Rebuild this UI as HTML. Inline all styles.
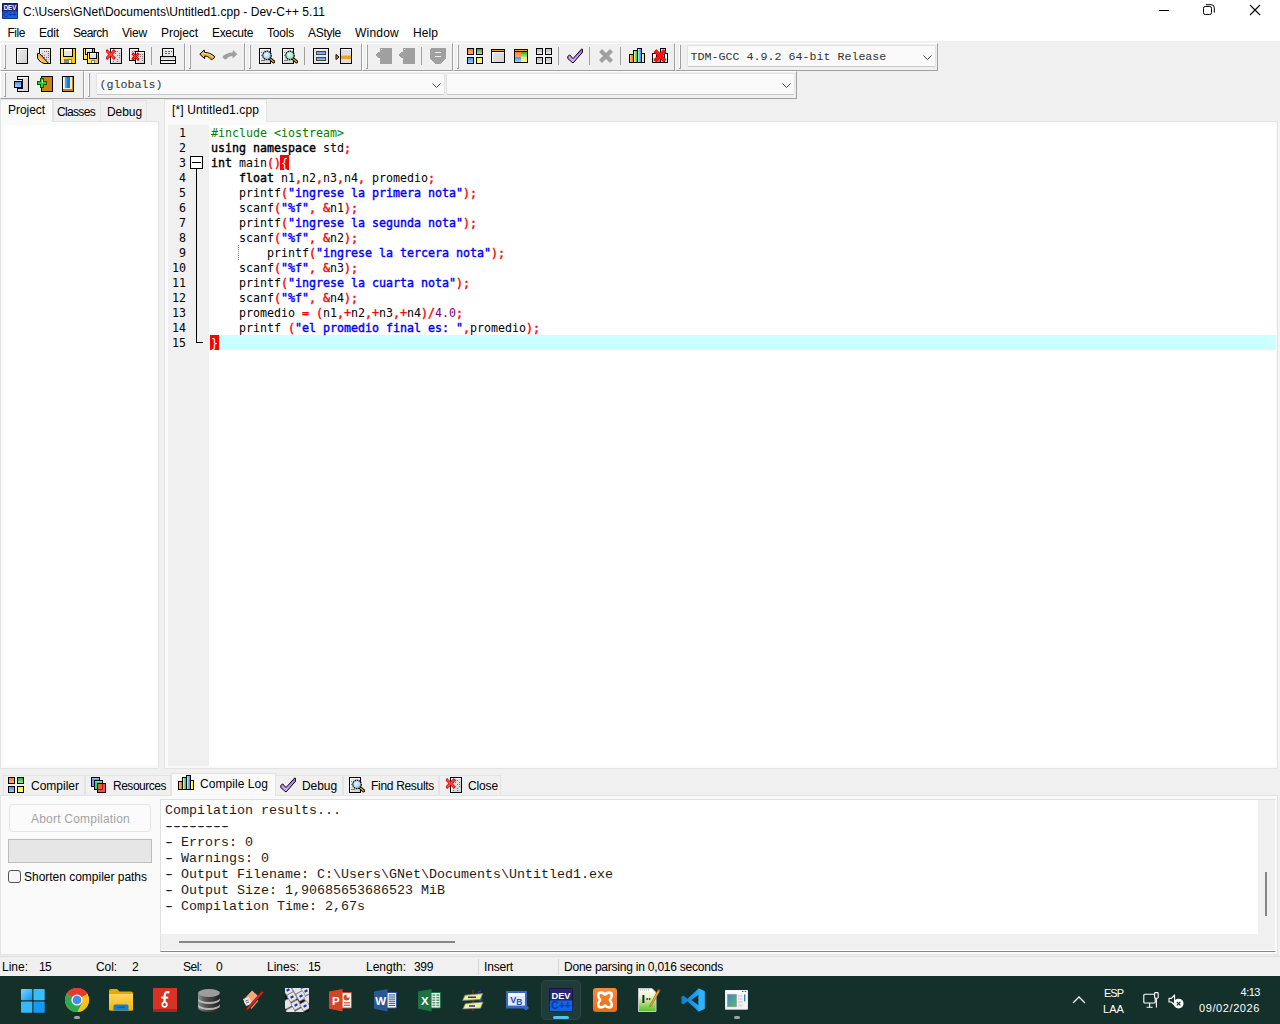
<!DOCTYPE html>
<html lang="es"><head><meta charset="utf-8"><title>C:\Users\GNet\Documents\Untitled1.cpp - Dev-C++ 5.11</title>
<style>
html,body{margin:0;padding:0}
body{width:1280px;height:1024px;overflow:hidden;position:relative;background:#f0f0f0;font-family:"Liberation Sans",sans-serif;font-size:12px;color:#000;line-height:1}
div,span,svg{position:absolute;box-sizing:border-box}
.t{white-space:pre;line-height:16px;height:16px}
.ui{font-family:"Liberation Sans",sans-serif;font-size:12px}
.mono{font-family:"Liberation Mono",monospace}
.code{font-family:"DejaVu Sans Mono","Liberation Mono",monospace;font-size:11.63px;white-space:pre;line-height:15px;height:15px;left:211px;letter-spacing:0}
.code b{font-weight:normal;-webkit-text-stroke:0.4px}
.code span,.code b{position:static}
.ln{font-family:"DejaVu Sans Mono","Liberation Mono",monospace;font-size:11.63px;line-height:15px;height:15px;left:168px;width:18px;text-align:right;color:#000}
.code b.br{color:#fff;-webkit-text-stroke:0}
.k{color:#000}
.s{color:#0000ff}
.r{color:#ff0000}
.p{color:#008000}
.n{color:#800080}
.tb{background:#f0f0f0;border-top:1px solid #fff;border-left:1px solid #fff;border-right:1px solid #a0a0a0;border-bottom:1px solid #a0a0a0}
.grip{width:1px;background:#a0a0a0;height:24px}
.sep{width:1px;background:#a0a0a0;height:18px;top:47px}
.combo{background:#fafafa;border:1px solid #e2e2e2;border-bottom-color:#c8c8c8;border-radius:2px}
.combo .t{font-family:"Liberation Mono",monospace;font-size:11.67px;left:2.5px;top:3px;color:#333}
.tab{background:#f0f0f0;border:1px solid #e3e3e3;border-bottom:none}
.tabsel{background:#fafafa;border:1px solid #e3e3e3;border-bottom:none}
.log{color:#1c1c1c;font-family:"Liberation Mono",monospace;font-size:13.33px;white-space:pre;line-height:16px;height:16px;left:165px}
.dash{text-shadow:1px 0 0 #1c1c1c,-1px 0 0 #1c1c1c}
.tray{color:#fff;font-size:12px}
</style></head>
<body>
<div style="left:0;top:0;width:1280px;height:41px;background:#fff"></div>
<div class="t ui" style="left:23px;top:4px;letter-spacing:0.040px;">C:\Users\GNet\Documents\Untitled1.cpp - Dev-C++ 5.11</div>
<div class="t ui" style="left:7.5px;top:25px;letter-spacing:-0.461px;">File</div>
<div class="t ui" style="left:39px;top:25px;letter-spacing:-0.172px;">Edit</div>
<div class="t ui" style="left:73px;top:25px;letter-spacing:-0.505px;">Search</div>
<div class="t ui" style="left:122px;top:25px;letter-spacing:-0.199px;">View</div>
<div class="t ui" style="left:161px;top:25px;letter-spacing:-0.051px;">Project</div>
<div class="t ui" style="left:212px;top:25px;letter-spacing:-0.337px;">Execute</div>
<div class="t ui" style="left:267px;top:25px;letter-spacing:-0.203px;">Tools</div>
<div class="t ui" style="left:308px;top:25px;letter-spacing:-0.281px;">AStyle</div>
<div class="t ui" style="left:355px;top:25px;letter-spacing:0.219px;">Window</div>
<div class="t ui" style="left:413px;top:25px;letter-spacing:0.078px;">Help</div>
<div class="tb" style="left:0px;top:43px;width:185px;height:28px"></div>
<div style="left:4px;top:45px;width:1px;height:23px;background:#fff"></div>
<div class="grip" style="left:5px;top:45px"></div>
<div style="left:4px;top:68px;width:2px;height:1px;background:#a0a0a0"></div>
<div class="tb" style="left:185px;top:43px;width:60px;height:28px"></div>
<div style="left:189px;top:45px;width:1px;height:23px;background:#fff"></div>
<div class="grip" style="left:190px;top:45px"></div>
<div style="left:189px;top:68px;width:2px;height:1px;background:#a0a0a0"></div>
<div class="tb" style="left:245px;top:43px;width:117px;height:28px"></div>
<div style="left:249px;top:45px;width:1px;height:23px;background:#fff"></div>
<div class="grip" style="left:250px;top:45px"></div>
<div style="left:249px;top:68px;width:2px;height:1px;background:#a0a0a0"></div>
<div class="tb" style="left:362px;top:43px;width:91px;height:28px"></div>
<div style="left:366px;top:45px;width:1px;height:23px;background:#fff"></div>
<div class="grip" style="left:367px;top:45px"></div>
<div style="left:366px;top:68px;width:2px;height:1px;background:#a0a0a0"></div>
<div class="tb" style="left:453px;top:43px;width:222px;height:28px"></div>
<div style="left:457px;top:45px;width:1px;height:23px;background:#fff"></div>
<div class="grip" style="left:458px;top:45px"></div>
<div style="left:457px;top:68px;width:2px;height:1px;background:#a0a0a0"></div>
<div class="tb" style="left:675px;top:43px;width:263px;height:28px"></div>
<div style="left:679px;top:45px;width:1px;height:23px;background:#fff"></div>
<div class="grip" style="left:680px;top:45px"></div>
<div style="left:679px;top:68px;width:2px;height:1px;background:#a0a0a0"></div>
<div class="tb" style="left:0px;top:71px;width:84px;height:28px"></div>
<div style="left:4px;top:73px;width:1px;height:23px;background:#fff"></div>
<div class="grip" style="left:5px;top:73px"></div>
<div style="left:4px;top:96px;width:2px;height:1px;background:#a0a0a0"></div>
<div class="tb" style="left:84px;top:71px;width:713px;height:28px"></div>
<div style="left:88px;top:73px;width:1px;height:23px;background:#fff"></div>
<div class="grip" style="left:89px;top:73px"></div>
<div style="left:88px;top:96px;width:2px;height:1px;background:#a0a0a0"></div>
<div class="sep" style="left:151px"></div>
<div class="sep" style="left:304px"></div>
<div class="sep" style="left:421px"></div>
<div class="sep" style="left:558px"></div>
<div class="sep" style="left:589px"></div>
<div class="sep" style="left:620px"></div>
<div class="combo" style="left:687px;top:45px;width:249px;height:22px"><div class="t">TDM-GCC 4.9.2 64-bit Release</div></div>
<div class="combo" style="left:96px;top:73px;width:349px;height:22px"><div class="t">(globals)</div></div>
<div class="combo" style="left:446px;top:73px;width:349px;height:22px"></div>
<svg style="left:923px;top:55px" width="9" height="5" viewBox="0 0 9 5"><path d="M0.5 0.5 L4.5 4.5 L8.5 0.5" fill="none" stroke="#444" stroke-width="1"/></svg>
<svg style="left:432px;top:83px" width="9" height="5" viewBox="0 0 9 5"><path d="M0.5 0.5 L4.5 4.5 L8.5 0.5" fill="none" stroke="#444" stroke-width="1"/></svg>
<svg style="left:782px;top:83px" width="9" height="5" viewBox="0 0 9 5"><path d="M0.5 0.5 L4.5 4.5 L8.5 0.5" fill="none" stroke="#444" stroke-width="1"/></svg>
<div style="left:0;top:121px;width:159px;height:648px;background:#fafafa;border:1px solid #e3e3e3"></div>
<div style="left:4px;top:125px;width:154px;height:640px;background:#fff"></div>
<div class="tabsel" style="left:0;top:99px;width:53px;height:23px"></div>
<div class="tab" style="left:53px;top:100px;width:48px;height:21px"></div>
<div class="tab" style="left:100px;top:100px;width:47px;height:21px"></div>
<div class="t ui" style="left:8px;top:102px;letter-spacing:-0.051px;">Project</div>
<div class="t ui" style="left:57px;top:104px;letter-spacing:-0.670px;">Classes</div>
<div class="t ui" style="left:107px;top:104px;letter-spacing:-0.075px;">Debug</div>
<div style="left:164px;top:121px;width:1114px;height:648px;background:#fafafa;border:1px solid #e3e3e3"></div>
<div class="tabsel" style="left:164px;top:99px;width:103px;height:23px"></div>
<div class="t ui" style="left:172px;top:102px;letter-spacing:0.134px;">[*] Untitled1.cpp</div>
<div style="left:168px;top:125px;width:1108px;height:641px;background:#fff"></div>
<div style="left:168px;top:125px;width:41px;height:641px;background:#f0f0f0"></div>
<div style="left:210px;top:335px;width:1066px;height:15px;background:#ccffff"></div>
<div style="left:280px;top:155px;width:9px;height:15px;background:#ff0000"></div>
<div style="left:210px;top:335px;width:9px;height:15px;background:#ff0000"></div>
<div class="ln" style="top:126px">1</div>
<div class="code" style="top:126px"><span class="p">#include &lt;iostream&gt;</span></div>
<div class="ln" style="top:141px">2</div>
<div class="code" style="top:141px"><b class="k">using</b> <b class="k">namespace</b> std<b class="r">;</b></div>
<div class="ln" style="top:156px">3</div>
<div class="code" style="top:156px"><b class="k">int</b> main<b class="r">()</b><b class="br">{</b></div>
<div class="ln" style="top:171px">4</div>
<div class="code" style="top:171px">    <b class="k">float</b> n1<b class="r">,</b>n2<b class="r">,</b>n3<b class="r">,</b>n4<b class="r">,</b> promedio<b class="r">;</b></div>
<div class="ln" style="top:186px">5</div>
<div class="code" style="top:186px">    printf<b class="r">(</b><b class="s">"ingrese la primera nota"</b><b class="r">);</b></div>
<div class="ln" style="top:201px">6</div>
<div class="code" style="top:201px">    scanf<b class="r">(</b><b class="s">"%f"</b><b class="r">,</b> <b class="r">&amp;</b>n1<b class="r">);</b></div>
<div class="ln" style="top:216px">7</div>
<div class="code" style="top:216px">    printf<b class="r">(</b><b class="s">"ingrese la segunda nota"</b><b class="r">);</b></div>
<div class="ln" style="top:231px">8</div>
<div class="code" style="top:231px">    scanf<b class="r">(</b><b class="s">"%f"</b><b class="r">,</b> <b class="r">&amp;</b>n2<b class="r">);</b></div>
<div class="ln" style="top:246px">9</div>
<div class="code" style="top:246px">        printf<b class="r">(</b><b class="s">"ingrese la tercera nota"</b><b class="r">);</b></div>
<div class="ln" style="top:261px">10</div>
<div class="code" style="top:261px">    scanf<b class="r">(</b><b class="s">"%f"</b><b class="r">,</b> <b class="r">&amp;</b>n3<b class="r">);</b></div>
<div class="ln" style="top:276px">11</div>
<div class="code" style="top:276px">    printf<b class="r">(</b><b class="s">"ingrese la cuarta nota"</b><b class="r">);</b></div>
<div class="ln" style="top:291px">12</div>
<div class="code" style="top:291px">    scanf<b class="r">(</b><b class="s">"%f"</b><b class="r">,</b> <b class="r">&amp;</b>n4<b class="r">);</b></div>
<div class="ln" style="top:306px">13</div>
<div class="code" style="top:306px">    promedio <b class="r">=</b> <b class="r">(</b>n1<b class="r">,+</b>n2<b class="r">,+</b>n3<b class="r">,+</b>n4<b class="r">)/</b><span class="n">4.0</span><b class="r">;</b></div>
<div class="ln" style="top:321px">14</div>
<div class="code" style="top:321px">    printf <b class="r">(</b><b class="s">"el promedio final es: "</b><b class="r">,</b>promedio<b class="r">);</b></div>
<div class="ln" style="top:336px">15</div>
<div class="code" style="top:336px"><b class="br">}</b></div>
<div style="left:190px;top:156px;width:13px;height:13px;border:1px solid #000;background:#fff"></div>
<div style="left:192px;top:162px;width:9px;height:1px;background:#000"></div>
<div style="left:196px;top:169px;width:1px;height:174px;background:#000"></div>
<div style="left:196px;top:342px;width:7px;height:1px;background:#000"></div>
<div style="left:238px;top:245px;width:0;height:15px;border-left:1px dotted #888"></div>
<div style="left:1278px;top:121px;width:2px;height:648px;background:#f4f4f4"></div>
<div style="left:0;top:795px;width:1278px;height:160px;background:#fafafa;border:1px solid #e3e3e3"></div>
<div class="tab" style="left:3px;top:775px;width:82px;height:20px"></div>
<div class="t ui" style="left:31px;top:778px;letter-spacing:-0.002px;">Compiler</div>
<div class="tab" style="left:85px;top:775px;width:86px;height:20px"></div>
<div class="t ui" style="left:113px;top:778px;letter-spacing:-0.484px;">Resources</div>
<div class="tabsel" style="left:171px;top:773px;width:105px;height:23px"></div>
<div class="t ui" style="left:200px;top:776px;letter-spacing:0.057px;">Compile Log</div>
<div class="tab" style="left:275px;top:775px;width:68px;height:20px"></div>
<div class="t ui" style="left:302px;top:778px;letter-spacing:-0.075px;">Debug</div>
<div class="tab" style="left:343px;top:775px;width:96px;height:20px"></div>
<div class="t ui" style="left:371px;top:778px;letter-spacing:-0.309px;">Find Results</div>
<div class="tab" style="left:439px;top:775px;width:62px;height:20px"></div>
<div class="t ui" style="left:468px;top:778px;letter-spacing:-0.138px;">Close</div>
<div style="left:9px;top:804px;width:142px;height:28px;border:1px solid #e5e5e5;border-radius:4px;background:#fbfbfb"></div>
<div class="t ui" style="left:31px;top:811px;letter-spacing:0.212px;color:#a3a3a3">Abort Compilation</div>
<div style="left:8px;top:839px;width:144px;height:24px;border:1px solid #bcbcbc;background:#e6e6e6"></div>
<div style="left:8px;top:870px;width:13px;height:13px;border:1px solid #555;border-radius:3px;background:#f6f6f6"></div>
<div class="t ui" style="left:24px;top:869px;letter-spacing:-0.018px;">Shorten compiler paths</div>
<div style="left:160px;top:799px;width:1116px;height:153px;background:#f0f0f0;border:1px solid #e0e0e0;border-bottom-color:#868686;border-right-color:#fff"></div>
<div style="left:161px;top:950px;width:1114px;height:1px;background:#fff"></div>
<div style="left:161px;top:800px;width:1097px;height:134px;background:#fff"></div>
<div class="log" style="top:803px">Compilation results...</div>
<div class="log dash" style="top:819px">--------</div>
<div class="log" style="top:835px"><span class="dash" style="position:static">-</span> Errors: 0</div>
<div class="log" style="top:851px"><span class="dash" style="position:static">-</span> Warnings: 0</div>
<div class="log" style="top:867px"><span class="dash" style="position:static">-</span> Output Filename: C:\Users\GNet\Documents\Untitled1.exe</div>
<div class="log" style="top:883px"><span class="dash" style="position:static">-</span> Output Size: 1,90685653686523 MiB</div>
<div class="log" style="top:899px"><span class="dash" style="position:static">-</span> Compilation Time: 2,67s</div>
<div style="left:179px;top:941px;width:276px;height:2px;background:#868686"></div>
<div style="left:1265px;top:872px;width:2px;height:44px;background:#868686"></div>
<div style="left:0;top:956px;width:1280px;height:20px;background:#f0f0f0;border-top:1px solid #dcdcdc"></div>
<div class="t ui" style="left:2px;top:959px;letter-spacing:-0.006px;">Line:</div>
<div class="t ui" style="left:39px;top:959px;letter-spacing:-0.680px;">15</div>
<div class="t ui" style="left:96px;top:959px;letter-spacing:-0.086px;">Col:</div>
<div class="t ui" style="left:132px;top:959px;letter-spacing:-0.688px;">2</div>
<div class="t ui" style="left:183px;top:959px;letter-spacing:-0.422px;">Sel:</div>
<div class="t ui" style="left:216px;top:959px;letter-spacing:-0.688px;">0</div>
<div class="t ui" style="left:267px;top:959px;letter-spacing:-0.005px;">Lines:</div>
<div class="t ui" style="left:308px;top:959px;letter-spacing:-0.680px;">15</div>
<div class="t ui" style="left:366px;top:959px;letter-spacing:-0.007px;">Length:</div>
<div class="t ui" style="left:414px;top:959px;letter-spacing:-0.344px;">399</div>
<div class="t ui" style="left:484px;top:959px;letter-spacing:-0.169px;">Insert</div>
<div class="t ui" style="left:564px;top:959px;letter-spacing:-0.223px;">Done parsing in 0,016 seconds</div>
<div style="left:478px;top:959px;width:1px;height:16px;background:#d7d7d7"></div>
<div style="left:558px;top:959px;width:1px;height:16px;background:#d7d7d7"></div>
<div style="left:0;top:976px;width:1280px;height:48px;background:#13302a"></div>
<svg width="0" height="0" style="left:0;top:0"><defs>
<linearGradient id="gDoc" x1="0" y1="0" x2="1" y2="1"><stop offset="0" stop-color="#e9e9e9"/><stop offset="1" stop-color="#d2d2d2"/></linearGradient>
<linearGradient id="gYel" x1="0" y1="0" x2="1" y2="0"><stop offset="0" stop-color="#fff27a"/><stop offset="0.5" stop-color="#ffd800"/><stop offset="1" stop-color="#ffc000"/></linearGradient>
<linearGradient id="gOr" x1="0" y1="0" x2="0" y2="1"><stop offset="0" stop-color="#ff7a2a"/><stop offset="1" stop-color="#ffb070"/></linearGradient>
<linearGradient id="gGr" x1="0" y1="0" x2="0" y2="1"><stop offset="0" stop-color="#2fa82f"/><stop offset="1" stop-color="#a8e890"/></linearGradient>
<linearGradient id="gBl" x1="0" y1="0" x2="0" y2="1"><stop offset="0" stop-color="#3f8ff0"/><stop offset="1" stop-color="#a8d0ff"/></linearGradient>
<linearGradient id="gYe" x1="0" y1="0" x2="0" y2="1"><stop offset="0" stop-color="#f5f020"/><stop offset="1" stop-color="#ffffa0"/></linearGradient>
<linearGradient id="gPu" x1="0" y1="0" x2="0" y2="1"><stop offset="0" stop-color="#9a5ce0"/><stop offset="1" stop-color="#dcc0ff"/></linearGradient>
<linearGradient id="gGy" x1="0" y1="0" x2="0" y2="1"><stop offset="0" stop-color="#b8b8b8"/><stop offset="1" stop-color="#ececec"/></linearGradient>
<linearGradient id="hOr" x1="0" y1="0" x2="1" y2="0"><stop offset="0.2" stop-color="#ffc080"/><stop offset="0.7" stop-color="#ff7a20"/></linearGradient>
<linearGradient id="hGr" x1="0" y1="0" x2="1" y2="0"><stop offset="0.2" stop-color="#d0ffb0"/><stop offset="0.7" stop-color="#50c830"/></linearGradient>
<linearGradient id="hBl" x1="0" y1="0" x2="1" y2="0"><stop offset="0.2" stop-color="#b8e0ff"/><stop offset="0.7" stop-color="#4a9cf8"/></linearGradient>
<linearGradient id="hYe" x1="0" y1="0" x2="1" y2="0"><stop offset="0.2" stop-color="#ffffc0"/><stop offset="0.7" stop-color="#f8f020"/></linearGradient>
<linearGradient id="gFlap" x1="1" y1="0" x2="0" y2="1"><stop offset="0.35" stop-color="#ff9a10"/><stop offset="0.8" stop-color="#ffd890"/></linearGradient>
<radialGradient id="gLensB" cx="0.4" cy="0.4" r="0.6"><stop offset="0" stop-color="#e8f8ff"/><stop offset="1" stop-color="#8ccdf0"/></radialGradient>
<radialGradient id="gLensG" cx="0.4" cy="0.4" r="0.6"><stop offset="0" stop-color="#e8fff4"/><stop offset="1" stop-color="#84dcb4"/></radialGradient>
</defs></svg>
<svg style="left:14px;top:48px" width="16" height="16" viewBox="0 0 16 16" shape-rendering="crispEdges"><rect x="2.5" y="0.5" width="11" height="15" fill="url(#gDoc)" stroke="#000"/><path d="M3.5 15 V1.5 H13" fill="none" stroke="#fff"/></svg>
<svg style="left:37px;top:48px" width="16" height="16" viewBox="0 0 16 16" shape-rendering="crispEdges"><rect x="2.5" y="0.5" width="11" height="15" fill="url(#gDoc)" stroke="#000"/><path d="M3.5 15 V1.5 H13" fill="none" stroke="#fff"/><rect x="7" y="3" width="1" height="1" fill="#777"/><rect x="9" y="3" width="1" height="1" fill="#777"/><rect x="11" y="3" width="1" height="1" fill="#777"/><rect x="5" y="5" width="1" height="1" fill="#777"/><rect x="11" y="5" width="1" height="1" fill="#777"/><rect x="5" y="7" width="1" height="1" fill="#777"/><rect x="7" y="7" width="1" height="1" fill="#777"/><rect x="11" y="7" width="1" height="1" fill="#777"/><rect x="5" y="9" width="1" height="1" fill="#777"/><rect x="7" y="9" width="1" height="1" fill="#777"/><rect x="9" y="9" width="1" height="1" fill="#777"/><rect x="11" y="9" width="1" height="1" fill="#777"/><rect x="5" y="11" width="1" height="1" fill="#777"/><rect x="9" y="11" width="1" height="1" fill="#777"/><rect x="5" y="13" width="1" height="1" fill="#777"/><rect x="7" y="13" width="1" height="1" fill="#777"/><path d="M2 6 V16 H11 Z" fill="#f0f0f0"/><g shape-rendering="geometricPrecision"><path d="M0.5 5.5 L2.6 5.5 L11.6 15.5 L7 15.5 L4.6 14.4 L2 12.4 L0.5 10 Z" fill="url(#gFlap)" stroke="#000" stroke-linejoin="round"/></g></svg>
<svg style="left:60px;top:48px" width="16" height="16" viewBox="0 0 16 16" shape-rendering="crispEdges"><rect x="0.5" y="0.5" width="15" height="15" fill="url(#gYel)" stroke="#000"/><rect x="3.5" y="0.5" width="9" height="8" fill="#e4e4e4" stroke="#000"/><rect x="4" y="1" width="8" height="2" fill="#fff"/><rect x="4" y="11" width="8" height="4" fill="#808080"/><rect x="9" y="12" width="2" height="3" fill="#fff"/></svg>
<svg style="left:83px;top:48px" width="16" height="16" viewBox="0 0 16 16" shape-rendering="crispEdges"><rect x="0.5" y="0.5" width="11" height="11" fill="url(#gYel)" stroke="#000"/><rect x="2.5" y="0.5" width="7" height="6" fill="#e4e4e4" stroke="#000"/><rect x="3" y="1" width="6" height="1" fill="#fff"/><rect x="4" y="8" width="4" height="3" fill="#808080"/><rect x="5" y="9" width="2" height="2" fill="#fff"/><rect x="4.5" y="4.5" width="11" height="11" fill="url(#gYel)" stroke="#000"/><rect x="6.5" y="4.5" width="7" height="6" fill="#e4e4e4" stroke="#000"/><rect x="7" y="5" width="6" height="1" fill="#fff"/><rect x="8" y="12" width="4" height="3" fill="#808080"/><rect x="9" y="13" width="2" height="2" fill="#fff"/></svg>
<svg style="left:106px;top:48px" width="16" height="16" viewBox="0 0 16 16" shape-rendering="crispEdges"><rect x="4.5" y="0.5" width="11" height="15" fill="url(#gDoc)" stroke="#000"/><path d="M5.5 15 V1.5 H15" fill="none" stroke="#fff"/><rect x="7" y="3" width="1" height="1" fill="#777"/><rect x="9" y="3" width="1" height="1" fill="#777"/><rect x="11" y="3" width="1" height="1" fill="#777"/><rect x="7" y="5" width="1" height="1" fill="#777"/><rect x="9" y="5" width="1" height="1" fill="#777"/><rect x="13" y="5" width="1" height="1" fill="#777"/><rect x="11" y="7" width="1" height="1" fill="#777"/><rect x="13" y="7" width="1" height="1" fill="#777"/><rect x="13" y="9" width="1" height="1" fill="#777"/><rect x="11" y="11" width="1" height="1" fill="#777"/><rect x="7" y="13" width="1" height="1" fill="#777"/><rect x="11" y="13" width="1" height="1" fill="#777"/><g shape-rendering="geometricPrecision"><path d="M1.2 3.2 L7.8 9.8 M7.8 3.2 L1.2 9.8" stroke="#e00000" stroke-width="3.0" stroke-linecap="square"/><path d="M1.2 3.2 L7.8 9.8 M7.8 3.2 L1.2 9.8" stroke="#ff5050" stroke-width="1.3" stroke-linecap="square"/></g></svg>
<svg style="left:129px;top:48px" width="16" height="16" viewBox="0 0 16 16" shape-rendering="crispEdges"><rect x="0.5" y="0.5" width="9" height="12" fill="url(#gDoc)" stroke="#000"/><path d="M1.5 12 V1.5 H9" fill="none" stroke="#fff"/><rect x="3" y="3" width="1" height="1" fill="#777"/><rect x="5" y="3" width="1" height="1" fill="#777"/><rect x="7" y="3" width="1" height="1" fill="#777"/><rect x="3" y="5" width="1" height="1" fill="#777"/><rect x="5" y="7" width="1" height="1" fill="#777"/><rect x="7" y="7" width="1" height="1" fill="#777"/><rect x="3" y="9" width="1" height="1" fill="#777"/><rect x="5" y="9" width="1" height="1" fill="#777"/><rect x="6.5" y="3.5" width="9" height="12" fill="url(#gDoc)" stroke="#000"/><path d="M7.5 15 V4.5 H15" fill="none" stroke="#fff"/><rect x="11" y="6" width="1" height="1" fill="#777"/><rect x="13" y="6" width="1" height="1" fill="#777"/><rect x="9" y="8" width="1" height="1" fill="#777"/><rect x="11" y="8" width="1" height="1" fill="#777"/><rect x="13" y="8" width="1" height="1" fill="#777"/><rect x="9" y="10" width="1" height="1" fill="#777"/><rect x="13" y="10" width="1" height="1" fill="#777"/><rect x="9" y="12" width="1" height="1" fill="#777"/><rect x="13" y="12" width="1" height="1" fill="#777"/><g shape-rendering="geometricPrecision"><path d="M4.2 6.2 L8.8 10.8 M8.8 6.2 L4.2 10.8" stroke="#e00000" stroke-width="2.6" stroke-linecap="square"/><path d="M4.2 6.2 L8.8 10.8 M8.8 6.2 L4.2 10.8" stroke="#ff5050" stroke-width="1.0" stroke-linecap="square"/></g></svg>
<svg style="left:160px;top:48px" width="16" height="16" viewBox="0 0 16 16" shape-rendering="crispEdges"><rect x="2.5" y="0.5" width="11" height="8" fill="#e4e4e4" stroke="#000"/><rect x="3" y="1" width="10" height="1" fill="#fff"/><rect x="5" y="3" width="2" height="1" fill="#666"/><rect x="8" y="3" width="2" height="1" fill="#666"/><rect x="11" y="3" width="1" height="1" fill="#666"/><rect x="5" y="5" width="2" height="1" fill="#666"/><rect x="8" y="5" width="2" height="1" fill="#666"/><rect x="0.5" y="8.5" width="15" height="7" fill="#f4f4f4" stroke="#000"/><rect x="1" y="9" width="14" height="2" fill="#d8d8d8"/><rect x="1" y="12" width="14" height="1" fill="#000"/></svg>
<svg style="left:199px;top:48px" width="16" height="16" viewBox="0 0 16 16"><path d="M0.8 6.2 L5.2 2 L5.6 4.6 C9 4.4 12 5.6 15.4 8.2 L15.6 9.6 L13.4 11.4 L11.6 11 C9.6 8.8 7.8 8 5.8 8 L5.6 10.6 Z" fill="#ffb02e" stroke="#000" stroke-width="1" stroke-linejoin="round"/><path d="M2.6 6.2 L4.6 4.2 L4.8 5.4 C8 5.4 11 6.4 13.6 8.4" fill="none" stroke="#ffe0a0" stroke-width="0.8"/></svg>
<svg style="left:222px;top:48px" width="16" height="16" viewBox="0 0 16 16"><path d="M15.4 6.2 L11 2 L10.6 4.6 C7.2 4.4 4.2 5.6 0.8 8.2 L0.6 9.6 L2.8 11.4 L4.6 11 C6.6 8.8 8.4 8 10.4 8 L10.6 10.6 Z" fill="#a0a0a0"/></svg>
<svg style="left:259px;top:48px" width="16" height="16" viewBox="0 0 16 16" shape-rendering="crispEdges"><rect x="0.5" y="0.5" width="11" height="15" fill="url(#gDoc)" stroke="#000"/><rect x="1" y="1" width="10" height="1" fill="#fff"/><rect x="1" y="1" width="1" height="14" fill="#fff"/><rect x="2" y="12" width="4" height="1" fill="#777"/><rect x="2" y="4" width="1" height="1" fill="#777"/><rect x="2" y="7" width="1" height="1" fill="#777"/><g shape-rendering="geometricPrecision"><path d="M11 10.6 L14.6 13.8" stroke="#000" stroke-width="3.2" stroke-linecap="round"/><path d="M11.2 10.8 L14.5 13.7" stroke="#f0a020" stroke-width="1.5" stroke-linecap="round"/><circle cx="8" cy="7.4" r="4.2" fill="url(#gLensB)" stroke="#000" stroke-width="1.3" stroke-dasharray="1.4 0.7"/></g></svg>
<svg style="left:282px;top:48px" width="16" height="16" viewBox="0 0 16 16" shape-rendering="crispEdges"><rect x="0.5" y="0.5" width="11" height="15" fill="url(#gDoc)" stroke="#000"/><rect x="1" y="1" width="10" height="1" fill="#fff"/><rect x="1" y="1" width="1" height="14" fill="#fff"/><rect x="2" y="12" width="4" height="1" fill="#777"/><rect x="2" y="4" width="1" height="1" fill="#777"/><rect x="2" y="7" width="1" height="1" fill="#777"/><g shape-rendering="geometricPrecision"><path d="M11 10.6 L14.6 13.8" stroke="#000" stroke-width="3.2" stroke-linecap="round"/><path d="M11.2 10.8 L14.5 13.7" stroke="#f0a020" stroke-width="1.5" stroke-linecap="round"/><circle cx="8" cy="7.4" r="4.2" fill="url(#gLensG)" stroke="#000" stroke-width="1.3" stroke-dasharray="1.4 0.7"/></g></svg>
<svg style="left:313px;top:48px" width="16" height="16" viewBox="0 0 16 16" shape-rendering="crispEdges"><rect x="0.5" y="0.5" width="15" height="15" fill="#e6e6e6" stroke="#000"/><rect x="1" y="1" width="14" height="1" fill="#fff"/><rect x="3.5" y="3.5" width="9" height="3" fill="url(#gBl)" stroke="#444"/><rect x="3.5" y="9.5" width="9" height="3" fill="url(#gBl)" stroke="#444"/></svg>
<svg style="left:335px;top:48px" width="17" height="16" viewBox="0 0 17 16" shape-rendering="crispEdges"><path d="M1 6.5 L4 9 L1 11.5Z" fill="#f0a020" stroke="#000" stroke-width="1" shape-rendering="geometricPrecision"/><rect x="5.5" y="0.5" width="11" height="15" fill="#dedede" stroke="#000"/><rect x="6" y="1" width="10" height="1" fill="#fff"/><rect x="6" y="7" width="10" height="1" fill="#c8c8c8"/><rect x="6" y="8" width="10" height="3" fill="#f0a020"/></svg>
<svg style="left:376px;top:48px" width="16" height="16" viewBox="0 0 16 16" shape-rendering="crispEdges"><path d="M4 0 H16 V16 H4 V10 L2 10 L0 8 V6 L2 4 H4 Z" fill="#a0a0a0"/><rect x="5" y="1" width="1" height="1" fill="#f0f0f0"/></svg>
<svg style="left:399px;top:48px" width="16" height="16" viewBox="0 0 16 16" shape-rendering="crispEdges"><path d="M4 0 H16 V16 H4 V10 L2 10 L0 8 V6 L2 4 H4 Z" fill="#a0a0a0"/><rect x="5" y="1" width="1" height="1" fill="#f0f0f0"/></svg>
<svg style="left:430px;top:48px" width="16" height="16" viewBox="0 0 16 16" shape-rendering="crispEdges"><path d="M1 0 H15 L16 1 V10 L12 15 L10 16 H6 L4 15 L0 10 V1 Z" fill="#a0a0a0"/><rect x="5" y="4" width="6" height="1" fill="#f0f0f0"/><rect x="5" y="8" width="6" height="1" fill="#f0f0f0"/></svg>
<svg style="left:467px;top:48px" width="16" height="16" viewBox="0 0 16 16" shape-rendering="crispEdges"><rect x="0.5" y="0.5" width="6" height="6" fill="url(#gOr)" stroke="#000"/><rect x="9.5" y="0.5" width="6" height="6" fill="url(#gGr)" stroke="#000"/><rect x="0.5" y="9.5" width="6" height="6" fill="url(#gBl)" stroke="#000"/><rect x="9.5" y="9.5" width="6" height="6" fill="url(#gYe)" stroke="#000"/></svg>
<svg style="left:491px;top:49px" width="14" height="14" viewBox="0 0 14 14" shape-rendering="crispEdges"><rect x="0.5" y="0.5" width="13" height="13" fill="url(#gDoc)" stroke="#000"/><rect x="1" y="1" width="12" height="1" fill="#f0a020"/><rect x="1" y="2" width="12" height="1" fill="#000"/><rect x="1" y="3" width="1" height="10" fill="#fff"/><rect x="1" y="3" width="12" height="1" fill="#fff"/></svg>
<svg style="left:514px;top:49px" width="14" height="14" viewBox="0 0 14 14" shape-rendering="crispEdges"><rect x="0.5" y="0.5" width="13" height="13" fill="#fff" stroke="#000"/><rect x="1" y="1" width="12" height="1" fill="#f0a020"/><rect x="1" y="2" width="12" height="1" fill="#000"/><rect x="1" y="3" width="6" height="5" fill="url(#gOr)"/><rect x="7" y="3" width="6" height="5" fill="url(#gGr)"/><rect x="1" y="8" width="6" height="5" fill="url(#gBl)"/><rect x="7" y="8" width="6" height="5" fill="url(#gYe)"/></svg>
<svg style="left:536px;top:48px" width="16" height="16" viewBox="0 0 16 16" shape-rendering="crispEdges"><rect x="0.5" y="0.5" width="6" height="6" fill="url(#gGy)" stroke="#000"/><rect x="9.5" y="0.5" width="6" height="6" fill="url(#gGy)" stroke="#000"/><rect x="0.5" y="9.5" width="6" height="6" fill="url(#gGy)" stroke="#000"/><rect x="9.5" y="9.5" width="6" height="6" fill="url(#gGy)" stroke="#000"/></svg>
<svg style="left:567px;top:48px" width="16" height="16" viewBox="0 0 16 16"><path d="M0.8 8.6 L2.6 6.8 L6 10.6 L14.8 0.8 L15.6 1.6 L15.6 4.2 L6 15 L0.8 10.6 Z" fill="url(#gPu)" stroke="#000" stroke-width="1" stroke-linejoin="round"/></svg>
<svg style="left:599px;top:49px" width="14" height="14" viewBox="0 0 14 14"><path d="M0 3 L3 0 L7 4 L11 0 L14 3 L10 7 L14 11 L11 14 L7 10 L3 14 L0 11 L4 7 Z" fill="#a0a0a0"/></svg>
<svg style="left:629px;top:48px" width="16" height="16" viewBox="0 0 16 16" shape-rendering="crispEdges"><rect x="0.5" y="6.5" width="4" height="8" fill="url(#hOr)" stroke="#000"/><rect x="4.5" y="2.5" width="4" height="12" fill="url(#hGr)" stroke="#000"/><rect x="8.5" y="0.5" width="4" height="14" fill="url(#hBl)" stroke="#000"/><rect x="12.5" y="5.5" width="3" height="9" fill="url(#hYe)" stroke="#000"/></svg>
<svg style="left:652px;top:48px" width="16" height="16" viewBox="0 0 16 16" shape-rendering="crispEdges"><rect x="0.5" y="5.5" width="15" height="9" fill="#d0d0d0" stroke="#000"/><rect x="8.5" y="0.5" width="5" height="5" fill="#d0d0d0" stroke="#000"/><rect x="1" y="6" width="3" height="4" fill="#fff"/><rect x="12" y="6" width="3" height="5" fill="#fff"/><rect x="4" y="5" width="1" height="10" fill="#000"/><rect x="8" y="5" width="1" height="10" fill="#000"/><rect x="12" y="5" width="1" height="10" fill="#000"/><rect x="2" y="11" width="2" height="2" fill="#888"/><rect x="6" y="12" width="2" height="2" fill="#888"/><rect x="13" y="12" width="2" height="2" fill="#fff"/><g shape-rendering="geometricPrecision"><path d="M3 2.6 L13 13 M13 2.6 L3 13" stroke="#d80000" stroke-width="4" stroke-linecap="butt"/><path d="M3 2.6 L13 13 M13 2.6 L3 13" stroke="#ff1414" stroke-width="2.8" stroke-linecap="butt"/></g></svg>
<svg style="left:14px;top:76px" width="16" height="16" viewBox="0 0 16 16" shape-rendering="crispEdges"><rect x="3.5" y="0.5" width="11" height="15" fill="url(#gDoc)" stroke="#000"/><rect x="4" y="1" width="10" height="1" fill="#fff"/><rect x="3" y="4" width="6" height="9" fill="#f0f0f0"/><rect x="8" y="3" width="1" height="10" fill="#000"/><rect x="3" y="3" width="6" height="1" fill="#000"/><rect x="3" y="12" width="6" height="1" fill="#000"/><rect x="0.5" y="5.5" width="7" height="6" fill="url(#gBl)" stroke="#000"/></svg>
<svg style="left:37px;top:76px" width="16" height="16" viewBox="0 0 16 16" shape-rendering="crispEdges"><rect x="4.5" y="0.5" width="11" height="15" fill="#c87808" stroke="#000"/><rect x="5" y="1" width="10" height="14" fill="#d08010"/><path d="M3.5 2.5 H6.5 V5.5 H9.5 V8.5 H6.5 V11.5 H3.5 V8.5 H0.5 V5.5 H3.5 Z" fill="#30d030" stroke="#006000" stroke-width="1"/><path d="M4.5 3.5 H5.5 V6.5 H8.5 V7 H4.5Z" fill="#b0ffb0"/></svg>
<svg style="left:60px;top:76px" width="16" height="16" viewBox="0 0 16 16" shape-rendering="crispEdges"><rect x="2.5" y="0.5" width="11" height="15" fill="#e8e8e8" stroke="#000"/><rect x="3" y="13" width="10" height="2" fill="#d08010"/><rect x="5" y="1" width="5" height="11" fill="#1080d0"/><rect x="5" y="1" width="2" height="11" fill="#40a0e8"/><rect x="3" y="1" width="1" height="12" fill="#fff"/><rect x="12" y="1" width="1" height="14" fill="#d08010"/></svg>
<svg style="left:8px;top:777px" width="16" height="16" viewBox="0 0 16 16" shape-rendering="crispEdges"><rect x="0.5" y="0.5" width="6" height="6" fill="url(#gOr)" stroke="#000"/><rect x="9.5" y="0.5" width="6" height="6" fill="url(#gGr)" stroke="#000"/><rect x="0.5" y="9.5" width="6" height="6" fill="url(#gBl)" stroke="#000"/><rect x="9.5" y="9.5" width="6" height="6" fill="url(#gYe)" stroke="#000"/></svg>
<svg style="left:91px;top:777px" width="16" height="16" viewBox="0 0 16 16" shape-rendering="crispEdges"><rect x="0.5" y="0.5" width="8" height="9" fill="#8c8cf4" stroke="#000"/><rect x="1" y="1" width="7" height="1" fill="#b0b0ff"/><rect x="3.5" y="3.5" width="8" height="9" fill="#38d878" stroke="#000"/><rect x="4" y="4" width="7" height="1" fill="#70f0a0"/><rect x="6.5" y="6.5" width="8" height="9" fill="#f05050" stroke="#000"/><rect x="7" y="7" width="4" height="5" fill="#d86830"/><rect x="11" y="7" width="1" height="5" fill="#c00000"/><rect x="7" y="12" width="5" height="1" fill="#c00000"/></svg>
<svg style="left:178px;top:775px" width="16" height="16" viewBox="0 0 16 16" shape-rendering="crispEdges"><rect x="0.5" y="6.5" width="4" height="8" fill="url(#hOr)" stroke="#000"/><rect x="4.5" y="2.5" width="4" height="12" fill="url(#hGr)" stroke="#000"/><rect x="8.5" y="0.5" width="4" height="14" fill="url(#hBl)" stroke="#000"/><rect x="12.5" y="5.5" width="3" height="9" fill="url(#hYe)" stroke="#000"/></svg>
<svg style="left:280px;top:777px" width="16" height="16" viewBox="0 0 16 16"><path d="M0.8 8.6 L2.6 6.8 L6 10.6 L14.8 0.8 L15.6 1.6 L15.6 4.2 L6 15 L0.8 10.6 Z" fill="url(#gPu)" stroke="#000" stroke-width="1" stroke-linejoin="round"/></svg>
<svg style="left:349px;top:777px" width="16" height="16" viewBox="0 0 16 16" shape-rendering="crispEdges"><rect x="0.5" y="0.5" width="11" height="15" fill="url(#gDoc)" stroke="#000"/><rect x="1" y="1" width="10" height="1" fill="#fff"/><rect x="1" y="1" width="1" height="14" fill="#fff"/><rect x="2" y="12" width="4" height="1" fill="#777"/><rect x="2" y="4" width="1" height="1" fill="#777"/><rect x="2" y="7" width="1" height="1" fill="#777"/><g shape-rendering="geometricPrecision"><path d="M11 10.6 L14.6 13.8" stroke="#000" stroke-width="3.2" stroke-linecap="round"/><path d="M11.2 10.8 L14.5 13.7" stroke="#f0a020" stroke-width="1.5" stroke-linecap="round"/><circle cx="8" cy="7.4" r="4.2" fill="url(#gLensB)" stroke="#000" stroke-width="1.3" stroke-dasharray="1.4 0.7"/></g></svg>
<svg style="left:446px;top:777px" width="16" height="16" viewBox="0 0 16 16" shape-rendering="crispEdges"><rect x="4.5" y="0.5" width="11" height="15" fill="url(#gDoc)" stroke="#000"/><path d="M5.5 15 V1.5 H15" fill="none" stroke="#fff"/><rect x="7" y="3" width="1" height="1" fill="#777"/><rect x="9" y="3" width="1" height="1" fill="#777"/><rect x="11" y="3" width="1" height="1" fill="#777"/><rect x="7" y="5" width="1" height="1" fill="#777"/><rect x="9" y="5" width="1" height="1" fill="#777"/><rect x="13" y="5" width="1" height="1" fill="#777"/><rect x="11" y="7" width="1" height="1" fill="#777"/><rect x="13" y="7" width="1" height="1" fill="#777"/><rect x="13" y="9" width="1" height="1" fill="#777"/><rect x="11" y="11" width="1" height="1" fill="#777"/><rect x="7" y="13" width="1" height="1" fill="#777"/><rect x="11" y="13" width="1" height="1" fill="#777"/><g shape-rendering="geometricPrecision"><path d="M1.2 3.2 L7.8 9.8 M7.8 3.2 L1.2 9.8" stroke="#e00000" stroke-width="3.0" stroke-linecap="square"/><path d="M1.2 3.2 L7.8 9.8 M7.8 3.2 L1.2 9.8" stroke="#ff5050" stroke-width="1.3" stroke-linecap="square"/></g></svg>
<svg width="0" height="0" style="left:0;top:0"><defs>
<linearGradient id="tWin" x1="0" y1="0" x2="1" y2="1"><stop offset="0" stop-color="#7fd6ff"/><stop offset="1" stop-color="#0f95f5"/></linearGradient>
<linearGradient id="tDb" x1="0" y1="0" x2="1" y2="0"><stop offset="0" stop-color="#8e8e8e"/><stop offset="0.3" stop-color="#585858"/><stop offset="1" stop-color="#1e1e1e"/></linearGradient>
<linearGradient id="tFold" x1="0" y1="0" x2="0" y2="1"><stop offset="0" stop-color="#ffd75e"/><stop offset="1" stop-color="#f5b400"/></linearGradient>
<linearGradient id="tNp" x1="0" y1="0" x2="0" y2="1"><stop offset="0" stop-color="#ffffff"/><stop offset="0.35" stop-color="#e8f4c8"/><stop offset="1" stop-color="#58c020"/></linearGradient>
<linearGradient id="tVs" x1="0" y1="0" x2="1" y2="0"><stop offset="0" stop-color="#0a7fd0"/><stop offset="1" stop-color="#2db2ff"/></linearGradient>
<linearGradient id="tApp" x1="0" y1="0" x2="1" y2="1"><stop offset="0" stop-color="#5080d0"/><stop offset="1" stop-color="#50c060"/></linearGradient>
<linearGradient id="tOr" x1="0" y1="0" x2="0" y2="1"><stop offset="0" stop-color="#f58a3c"/><stop offset="1" stop-color="#ee6a10"/></linearGradient>
</defs></svg>
<div style="left:541px;top:980px;width:40px;height:40px;border-radius:5px;background:#213b39;border:1px solid #2d4745"></div>
<svg style="left:21px;top:989px" width="24" height="24" viewBox="0 0 24 24"><rect x="0" y="0" width="11.3" height="11.3" rx="0.8" fill="url(#tWin)"/><rect x="12.4" y="0" width="11.3" height="11.3" rx="0.8" fill="#38bdfb"/><rect x="0" y="12.4" width="11.3" height="11.3" rx="0.8" fill="#38b8fa"/><rect x="12.4" y="12.4" width="11.3" height="11.3" rx="0.8" fill="#129af6"/></svg>
<svg style="left:65px;top:988px" width="24" height="24" viewBox="0 0 24 24"><circle cx="12" cy="12" r="12" fill="#fbc116"/><path d="M12 12 L1.6 6 A12 12 0 0 1 22.4 6 Z" fill="#e33b2e"/><path d="M12 0 A12 12 0 0 1 22.4 6 L12 6Z" fill="#e33b2e"/><path d="M12 12 L1.6 6 A12 12 0 0 0 12.6 24 L17.2 15 Z" fill="#2da94f"/><path d="M12 12 L22.4 6 A12 12 0 0 1 12.6 24 L17.2 15 Z" fill="#fbc116"/><path d="M1.6 6 A12 12 0 0 1 22.4 6 L12 6 Z" fill="#e33b2e"/><circle cx="12" cy="12" r="5.6" fill="#fff"/><circle cx="12" cy="12" r="4.4" fill="#4a8af4"/></svg>
<div style="left:74px;top:1016px;width:6px;height:3px;border-radius:1.5px;background:#9aa5a4"></div>
<svg style="left:109px;top:989px" width="24" height="22" viewBox="0 0 24 22"><path d="M0 2 Q0 0 2 0 H8 L10.5 2.5 H22 Q24 2.5 24 4.5 V20 Q24 21.5 22.5 21.5 H1.5 Q0 21.5 0 20 Z" fill="#e8a800"/><path d="M0 5 H24 V20 Q24 21.5 22.5 21.5 H1.5 Q0 21.5 0 20 Z" fill="url(#tFold)"/><path d="M4.5 21.5 V17 Q4.5 15.5 6 15.5 H18 Q19.5 15.5 19.5 17 V21.5 Z" fill="#1080d8"/><rect x="8" y="17.5" width="8" height="1.6" rx="0.8" fill="#0a5cab"/></svg>
<svg style="left:153px;top:988px" width="24" height="24" viewBox="0 0 24 24"><rect x="0" y="0" width="24" height="24" fill="#d93123"/><rect x="0" y="21" width="24" height="3" fill="#a9251a"/><path d="M16.4 4.4 Q11.6 3.2 11.6 8 V15" fill="none" stroke="#fff" stroke-width="2.2"/><path d="M8.2 9.6 H15.2" stroke="#fff" stroke-width="2"/><circle cx="11.6" cy="16.6" r="2.3" fill="none" stroke="#fff" stroke-width="1.6"/></svg>
<svg style="left:198px;top:989px" width="22" height="23" viewBox="0 0 22 23"><path d="M0 4 V19 A11 4 0 0 0 22 19 V4 Z" fill="url(#tDb)"/><ellipse cx="11" cy="4" rx="11" ry="4" fill="#9c9c9c"/><path d="M0 9 A11 4 0 0 0 22 9 V11 A11 4 0 0 1 0 11Z" fill="#c9c9c9" opacity="0.85"/><path d="M0 15 A11 4 0 0 0 22 15 V17 A11 4 0 0 1 0 17Z" fill="#c9c9c9" opacity="0.85"/></svg>
<svg style="left:242px;top:989px" width="22" height="22" viewBox="0 0 22 22"><path d="M3 9 L10 1.5 L16 7 L8 16 L2 14 Z" fill="#f3a978"/><path d="M1 10 L7 8 L10 15 L4 17 Z" fill="#e9e4dc"/><path d="M3.5 12 L6.5 11 M4.2 14 L7 13" stroke="#6070a0" stroke-width="1"/><path d="M20 2 L21.5 3.5 L6.5 20.5 L4 21.5 L4.8 19 Z" fill="#e02020" stroke="#7a0c0c" stroke-width="0.5"/><path d="M9 19.5 L16 11.5" stroke="#c8a050" stroke-width="1.2"/></svg>
<svg style="left:285px;top:988px" width="24" height="24" viewBox="0 0 24 24"><svg x="0" y="0" width="24" height="24" viewBox="0 0 24 24" style="position:static;overflow:hidden"><rect x="0" y="0" width="24" height="24" fill="#111"/><rect x="-1" y="-2" width="8" height="8" rx="1.5" fill="#e6e6ea" stroke="#8a8a90" stroke-width="0.8" transform="rotate(-28 3 2)"/><rect x="8" y="-3" width="8" height="8" rx="1.5" fill="#e6e6ea" stroke="#8a8a90" stroke-width="0.8" transform="rotate(-28 12 1)"/><rect x="17" y="-1" width="8" height="8" rx="1.5" fill="#e6e6ea" stroke="#8a8a90" stroke-width="0.8" transform="rotate(-28 21 3)"/><rect x="3" y="5" width="8" height="8" rx="1.5" fill="#e6e6ea" stroke="#8a8a90" stroke-width="0.8" transform="rotate(-28 7 9)"/><rect x="12" y="4" width="8" height="8" rx="1.5" fill="#e6e6ea" stroke="#8a8a90" stroke-width="0.8" transform="rotate(-28 16 8)"/><rect x="20" y="7" width="8" height="8" rx="1.5" fill="#e6e6ea" stroke="#8a8a90" stroke-width="0.8" transform="rotate(-28 24 11)"/><rect x="-2" y="12" width="8" height="8" rx="1.5" fill="#e6e6ea" stroke="#8a8a90" stroke-width="0.8" transform="rotate(-28 2 16)"/><rect x="7" y="13" width="8" height="8" rx="1.5" fill="#e6e6ea" stroke="#8a8a90" stroke-width="0.8" transform="rotate(-28 11 17)"/><rect x="16" y="14" width="8" height="8" rx="1.5" fill="#e6e6ea" stroke="#8a8a90" stroke-width="0.8" transform="rotate(-28 20 18)"/><rect x="2" y="20" width="8" height="8" rx="1.5" fill="#e6e6ea" stroke="#8a8a90" stroke-width="0.8" transform="rotate(-28 6 24)"/><rect x="11" y="21" width="8" height="8" rx="1.5" fill="#e6e6ea" stroke="#8a8a90" stroke-width="0.8" transform="rotate(-28 15 25)"/><rect x="1.4" y="1" width="3.2" height="2" fill="#2030c0" transform="rotate(-28 3 2)"/><rect x="5.4" y="8" width="3.2" height="2" fill="#2030c0" transform="rotate(-28 7 9)"/><rect x="14.4" y="7" width="3.2" height="2" fill="#2030c0" transform="rotate(-28 16 8)"/><rect x="9.4" y="16" width="3.2" height="2" fill="#2030c0" transform="rotate(-28 11 17)"/><rect x="18.4" y="17" width="3.2" height="2" fill="#2030c0" transform="rotate(-28 20 18)"/><rect x="19.4" y="2" width="3.2" height="2" fill="#2030c0" transform="rotate(-28 21 3)"/></svg></svg>
<svg style="left:329px;top:989px" width="23" height="23" viewBox="0 0 23 23"><rect x="10" y="3.5" width="12.5" height="15.5" rx="0.8" fill="#fff" stroke="#d24625" stroke-width="1.2"/><circle cx="17.6" cy="8.6" r="3" fill="#d24625"/><path d="M17.6 8.6 V5.6 A3 3 0 0 1 20.6 8.6Z" fill="#fff"/><rect x="15" y="13.2" width="6" height="1.2" fill="#d24625"/><rect x="15" y="15.6" width="6" height="1.2" fill="#d24625"/><path d="M0 2.6 L13.6 0 V22.4 L0 19.8 Z" fill="#d24625"/><text x="6.8" y="15.6" text-anchor="middle" font-family="Liberation Sans,sans-serif" font-weight="bold" font-size="11.5" fill="#fff">P</text></svg>
<svg style="left:374px;top:989px" width="23" height="23" viewBox="0 0 23 23"><rect x="10" y="3.5" width="12.5" height="15.5" rx="0.8" fill="#fff" stroke="#2b5797" stroke-width="1.2"/><rect x="14.6" y="5.4" width="6.6" height="1.1" fill="#2b5797"/><rect x="14.6" y="7.5" width="6.6" height="1.1" fill="#2b5797"/><rect x="14.6" y="9.600000000000001" width="6.6" height="1.1" fill="#2b5797"/><rect x="14.6" y="11.700000000000001" width="6.6" height="1.1" fill="#2b5797"/><rect x="14.6" y="13.8" width="6.6" height="1.1" fill="#2b5797"/><rect x="14.6" y="15.9" width="6.6" height="1.1" fill="#2b5797"/><path d="M0 2.6 L13.6 0 V22.4 L0 19.8 Z" fill="#2b5797"/><text x="6.8" y="15.6" text-anchor="middle" font-family="Liberation Sans,sans-serif" font-weight="bold" font-size="11.5" fill="#fff">W</text></svg>
<svg style="left:418px;top:989px" width="23" height="23" viewBox="0 0 23 23"><rect x="10" y="3.5" width="12.5" height="15.5" rx="0.8" fill="#fff" stroke="#1f7244" stroke-width="1.2"/><rect x="14.4" y="5.2" width="7" height="1.6" fill="#1f7244" opacity="0.75"/><rect x="14.4" y="7.800000000000001" width="7" height="1.6" fill="#1f7244" opacity="0.75"/><rect x="14.4" y="10.4" width="7" height="1.6" fill="#1f7244" opacity="0.75"/><rect x="14.4" y="13.0" width="7" height="1.6" fill="#1f7244" opacity="0.75"/><rect x="14.4" y="15.600000000000001" width="7" height="1.6" fill="#1f7244" opacity="0.75"/><rect x="17.4" y="4.5" width="0.9" height="13.6" fill="#fff"/><path d="M0 2.6 L13.6 0 V22.4 L0 19.8 Z" fill="#1f7244"/><text x="6.8" y="15.6" text-anchor="middle" font-family="Liberation Sans,sans-serif" font-weight="bold" font-size="11.5" fill="#fff">X</text></svg>
<svg style="left:462px;top:990px" width="23" height="21" viewBox="0 0 23 21"><path d="M11 0 V21" stroke="#a02020" stroke-width="1.4"/><path d="M3 5.2 L20.6 3.6 L18.4 9.6 L0.6 10.4 Z" fill="#eef09a" stroke="#80806a" stroke-width="0.8"/><path d="M3.4 13.6 L21 12 L18.6 18.2 L0.8 19 Z" fill="#eef09a" stroke="#80806a" stroke-width="0.8"/><path d="M6 7.2 H14 M7 16 H13" stroke="#2030b0" stroke-width="1.6"/><path d="M16 2.6 L19 0.6 M17.4 11 L20.4 9" stroke="#2040e0" stroke-width="1.2"/></svg>
<svg style="left:506px;top:991px" width="23" height="20" viewBox="0 0 23 20"><path d="M0 0 H21 V14.6 L23 17 L20 19.4 L17.6 17.4 H0 Z" fill="#3566c8"/><rect x="2" y="2" width="17" height="12.6" fill="#dfe9ff"/><rect x="2" y="2" width="17" height="3" fill="#f6f9ff"/><text x="10.4" y="12.4" text-anchor="middle" font-family="Liberation Sans,sans-serif" font-weight="bold" font-size="9" fill="#1c50c0">V<tspan dy="1.6" font-size="8.5">B</tspan></text></svg>
<svg style="left:549px;top:988px" width="24" height="24" viewBox="0 0 24 24"><rect x="0" y="0" width="24" height="24" rx="1.5" fill="#1a1238"/><rect x="0.8" y="0.8" width="22.4" height="11.6" fill="#2a2470"/><rect x="0.8" y="12.4" width="22.4" height="10.8" fill="#1263e6"/><text x="12" y="10.6" text-anchor="middle" font-family="Liberation Sans,sans-serif" font-weight="bold" font-size="9.6" fill="#fff" textLength="19" lengthAdjust="spacingAndGlyphs">DEV</text><text x="12" y="21.4" text-anchor="middle" font-family="Liberation Sans,sans-serif" font-weight="bold" font-size="10.5" fill="#0a3ca0" textLength="20" lengthAdjust="spacingAndGlyphs">C++</text></svg>
<div style="left:553px;top:1016px;width:16px;height:3px;border-radius:1.5px;background:#4cc2ff"></div>
<svg style="left:593px;top:988px" width="24" height="24" viewBox="0 0 24 24"><rect x="0" y="0" width="24" height="24" rx="3" fill="url(#tOr)"/><path d="M5.2 7.2 Q5.2 4.6 8 4.6 Q10.4 4.6 12 6.6 Q13.6 4.6 16 4.6 Q18.8 4.6 18.8 7.2 Q18.8 9.6 16.8 12 Q18.8 14.4 18.8 16.8 Q18.8 19.4 16 19.4 Q13.6 19.4 12 17.4 Q10.4 19.4 8 19.4 Q5.2 19.4 5.2 16.8 Q5.2 14.4 7.2 12 Q5.2 9.6 5.2 7.2 Z" fill="none" stroke="#fff" stroke-width="2.6" stroke-linejoin="round"/></svg>
<svg style="left:638px;top:988px" width="23" height="24" viewBox="0 0 23 24"><path d="M0.5 0.5 H14 L18 4.5 V23.5 H0.5 Z" fill="url(#tNp)" stroke="#c8c8c8" stroke-width="1"/><path d="M2 2 H12" stroke="#9a9a9a" stroke-width="1" stroke-dasharray="1 1"/><rect x="4.4" y="7" width="2" height="8" fill="#222"/><path d="M8.4 11 H13" stroke="#222" stroke-width="1.4" stroke-dasharray="1.6 0.8"/><path d="M20.4 1.2 L22.2 2.6 L13.4 18 L11.8 19 L12 17 Z" fill="#f0a830" stroke="#7a5010" stroke-width="0.5"/><path d="M20.4 1.2 L22.2 2.6 L21.4 4 L19.6 2.6Z" fill="#d04040"/></svg>
<svg style="left:681px;top:988px" width="24" height="24" viewBox="0 0 24 24"><path d="M17.6 0.4 L23.6 3.2 V20.8 L17.6 23.6 L6.4 13.2 L2.4 16.4 L0.4 15.2 V8.8 L2.4 7.6 L6.4 10.8 Z M17.6 6.8 L10.4 12 L17.6 17.2 Z" fill="url(#tVs)" fill-rule="evenodd"/><path d="M17.6 0.4 L23.6 3.2 V20.8 L17.6 23.6 Z" fill="#2db2ff"/></svg>
<svg style="left:725px;top:990px" width="23" height="20" viewBox="0 0 23 20"><rect x="0" y="0" width="23" height="19.4" rx="0.8" fill="#f4f4f4" stroke="#d0d0d0" stroke-width="0.6"/><rect x="0.6" y="0.6" width="21.8" height="2" fill="#fdfdfd"/><rect x="17" y="1" width="1.6" height="1" fill="#4060c0"/><rect x="19.6" y="1" width="1.6" height="1" fill="#4060c0"/><rect x="2.4" y="4.4" width="9" height="12.4" fill="url(#tApp)" stroke="#8890b0" stroke-width="0.6"/><rect x="13" y="5" width="4.4" height="1.8" fill="#d6d6d6"/><rect x="13" y="8" width="4.4" height="1.8" fill="#d6d6d6"/><rect x="13" y="11" width="4.4" height="1.8" fill="#d6d6d6"/><rect x="13" y="14.6" width="4.4" height="1.8" fill="#d6d6d6"/><rect x="19" y="4.4" width="1.4" height="7" fill="#3a8ad0"/></svg>
<div style="left:734px;top:1016px;width:6px;height:3px;border-radius:1.5px;background:#9aa5a4"></div>
<svg style="left:1072px;top:996px" width="14" height="8" viewBox="0 0 14 8"><path d="M1 7 L7 1 L13 7" fill="none" stroke="#fff" stroke-width="1.3"/></svg>
<div class="t ui" style="left:1104px;top:985px;letter-spacing:-1.005px;color:#fff;font-size:11px">ESP</div>
<div class="t ui" style="left:1103px;top:1001px;letter-spacing:0.068px;color:#fff;font-size:11px">LAA</div>
<div class="t ui" style="left:1240.5px;top:984px;letter-spacing:-0.480px;color:#fff;font-size:11px">4:13</div>
<div class="t ui" style="left:1199px;top:1000px;letter-spacing:0.594px;color:#fff;font-size:11px">09/02/2026</div>
<svg style="left:1143px;top:992px" width="17" height="17" viewBox="0 0 17 17"><g fill="none" stroke="#fff" stroke-width="1.1"><rect x="0.8" y="2.2" width="11.4" height="8.8" rx="1"/><path d="M3.6 15.2 H9.6 M6.6 11 V15"/><rect x="11.6" y="0.6" width="3.6" height="5.6" rx="0.9" fill="#13302a"/><path d="M13.4 6.2 V15.6"/></g></svg>
<svg style="left:1168px;top:993px" width="17" height="17" viewBox="0 0 17 17"><g fill="none" stroke="#fff" stroke-width="1.1"><path d="M1 5.4 H3.4 L6.6 2 V12 L3.4 9 H1 Z" stroke-linejoin="round"/><circle cx="10.6" cy="10.6" r="4.4" fill="#fff"/></g><path d="M8.8 8.8 L12.4 12.4 M12.4 8.8 L8.8 12.4" stroke="#13302a" stroke-width="1.2"/></svg>
<svg style="left:2px;top:3px" width="16" height="16" viewBox="0 0 24 24"><rect x="0" y="0" width="24" height="24" rx="1.5" fill="#1a1238"/><rect x="0.8" y="0.8" width="22.4" height="11.6" fill="#2a2470"/><rect x="0.8" y="12.4" width="22.4" height="10.8" fill="#1263e6"/><text x="12" y="10.6" text-anchor="middle" font-family="Liberation Sans,sans-serif" font-weight="bold" font-size="9.6" fill="#fff" textLength="19" lengthAdjust="spacingAndGlyphs">DEV</text><text x="12" y="21.4" text-anchor="middle" font-family="Liberation Sans,sans-serif" font-weight="bold" font-size="10.5" fill="#0a3ca0" textLength="20" lengthAdjust="spacingAndGlyphs">C++</text></svg>
<div style="left:1159px;top:10px;width:10px;height:1px;background:#000"></div>
<svg style="left:1203px;top:4px" width="12" height="12" viewBox="0 0 12 12"><g fill="none" stroke="#000" stroke-width="1"><rect x="0.5" y="2.5" width="8" height="8" rx="1.8"/><path d="M2.8 0.7 H8.2 Q11.3 0.7 11.3 3.8 V8.6"/></g></svg>
<svg style="left:1249px;top:4px" width="12" height="12" viewBox="0 0 12 12"><path d="M1 1 L11 11 M11 1 L1 11" stroke="#000" stroke-width="1.1"/></svg>
</body></html>
